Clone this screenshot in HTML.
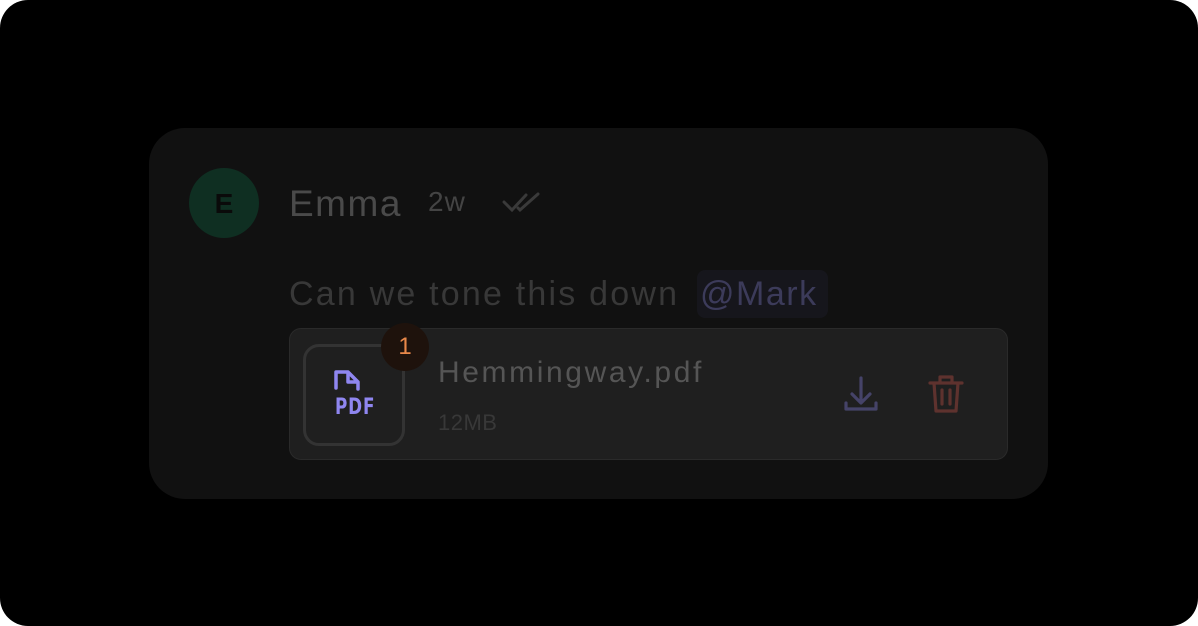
<!DOCTYPE html>
<html><head><style>
body{margin:0;background:#fff;width:1198px;height:626px;overflow:hidden;font-family:"Liberation Sans",sans-serif}
.bg{position:absolute;left:0;top:0;width:1198px;height:626px;background:#000;border-radius:28px}
.card{position:absolute;left:149px;top:128px;width:899px;height:371px;background:#111;border-radius:36px}
.av{position:absolute;left:189px;top:168px;width:70px;height:70px;border-radius:50%;background:#0f2f22;color:#0a0a0a;font-weight:bold;font-size:28px;text-align:center;line-height:72px}
.t{position:absolute;white-space:nowrap}
</style></head><body>
<div class="bg"></div>
<div class="card"></div>
<div class="av">E</div>
<div class="t" style="left:289px;top:183px;font-size:37px;color:#4a4a4a;letter-spacing:1.5px">Emma</div>
<div class="t" style="left:428px;top:186px;font-size:28px;color:#444;letter-spacing:1px">2w</div>
<svg class="t" style="left:500px;top:190px" width="44" height="26" viewBox="0 0 44 26" fill="none" stroke="#3a3a3a" stroke-width="3" stroke-linecap="round"><path d="M4 12l8 8L26 5M18 18l2 2L38 4"/></svg>
<div style="position:absolute;left:697px;top:270px;width:131px;height:48px;background:#16161c;border-radius:8px"></div>
<div class="t" style="left:289px;top:275px;font-size:34px;color:#383838;letter-spacing:2.2px">Can we tone this down</div>
<div class="t" style="left:700px;top:275px;font-size:34px;color:#3c3b5a;letter-spacing:1.5px">@Mark</div>
<div style="position:absolute;left:289px;top:328px;width:717px;height:130px;background:#1f1f1f;border:1px solid #2a2a2a;border-radius:12px"></div>
<div style="position:absolute;left:303px;top:344px;width:96px;height:96px;border:3px solid #333;border-radius:16px"></div>
<svg class="t" style="left:330px;top:366px" width="50" height="54" viewBox="0 0 50 54" fill="none" stroke="#8f86f0" stroke-width="3.5" stroke-linecap="round" stroke-linejoin="round"><path d="M6 22V6h12l10 10v7M18 6v10h10"/></svg>
<div class="t" style="left:335px;top:395px;font-size:22px;font-weight:bold;color:#8f86f0;letter-spacing:1px;transform:scaleX(0.85);transform-origin:left;font-family:'DejaVu Sans Condensed','Liberation Sans',sans-serif">PDF</div>
<div style="position:absolute;left:381px;top:323px;width:48px;height:48px;border-radius:50%;background:#1e120c;color:#e8884a;font-size:24px;text-align:center;line-height:48px">1</div>
<div class="t" style="left:438px;top:356px;font-size:30px;color:#555;letter-spacing:2.6px">Hemmingway.pdf</div>
<div class="t" style="left:438px;top:410px;font-size:22px;color:#383838;letter-spacing:0.5px">12MB</div>
<svg class="t" style="left:843px;top:376px" width="36" height="38" viewBox="0 0 36 38" fill="none" stroke="#454368" stroke-width="3.2" stroke-linecap="round" stroke-linejoin="round"><path d="M18 2v24M9 18l9 9 9-9M3 27v6h30v-6"/></svg>
<svg class="t" style="left:928px;top:374px" width="36" height="40" viewBox="0 0 36 40" fill="none" stroke="#5e322e" stroke-width="3.2" stroke-linecap="round" stroke-linejoin="round"><path d="M2 9h32M12 9V3h12v6M6 9l2 28h20l2-28M14 16v14M22 16v14"/></svg>
</body></html>
